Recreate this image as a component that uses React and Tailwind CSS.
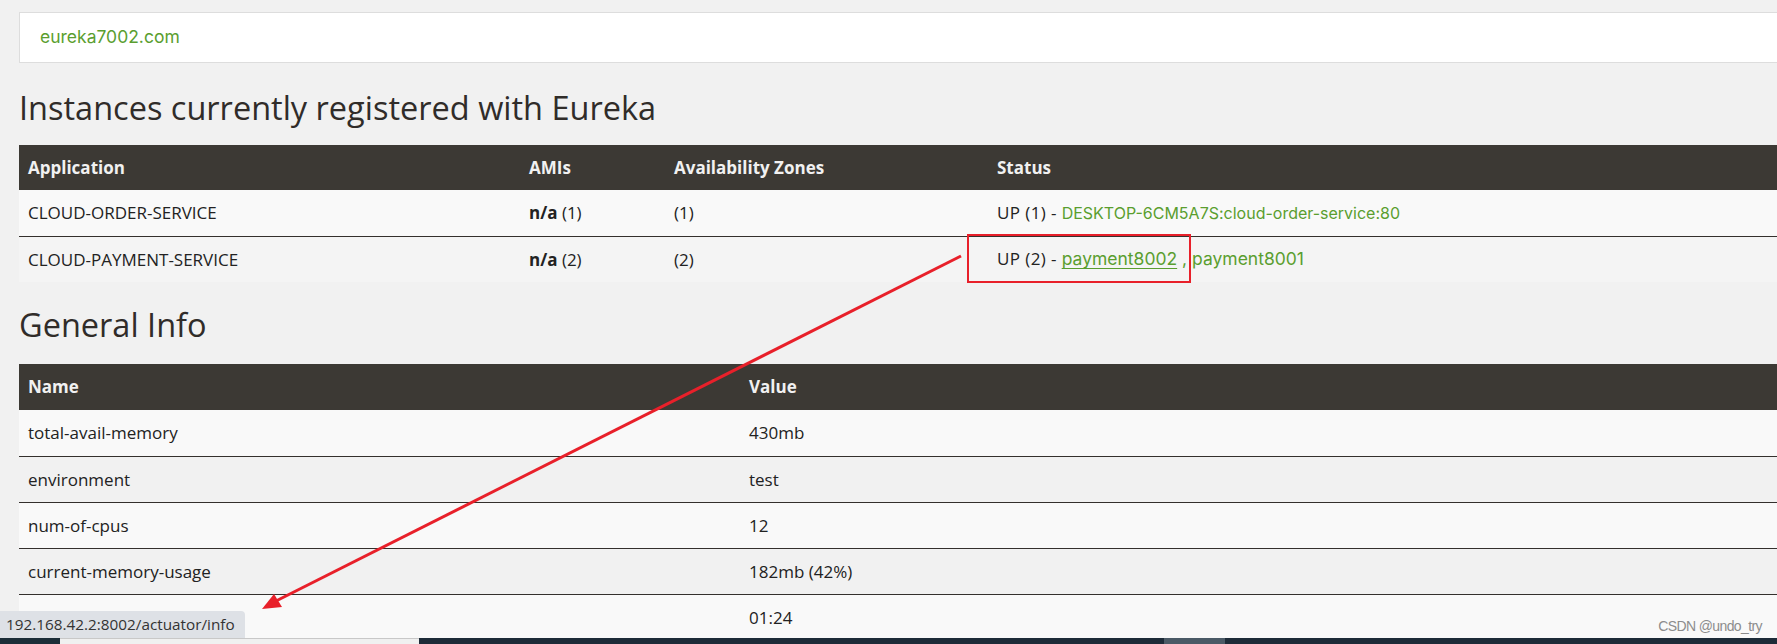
import React from 'react';

const GREEN = 'text-[#5a9e2f]';

const instances = [
  { app: 'CLOUD-ORDER-SERVICE', ami: '(1)', az: '(1)', up: 'UP (1) - ', links: ['DESKTOP-6CM5A7S:cloud-order-service:80'] },
  { app: 'CLOUD-PAYMENT-SERVICE', ami: '(2)', az: '(2)', up: 'UP (2) - ', links: ['payment8002', 'payment8001'] },
];

const info = [
  ['total-avail-memory', '430mb'],
  ['environment', 'test'],
  ['num-of-cpus', '12'],
  ['current-memory-usage', '182mb (42%)'],
  ['server-uptime', '01:24'],
];

const Heading = ({ children, className }) => (
  <h1 className={`font-['Open_Sans',sans-serif] text-[32.5px] leading-[38px] text-[#302c29] ${className}`}>
    {children}
  </h1>
);

const Annotation = () => (
  <svg className="absolute inset-0 pointer-events-none" width="1777" height="644">
    <rect x="968" y="235" width="222" height="47" fill="none" stroke="#e8202a" strokeWidth="2" />
    <line x1="961" y1="256" x2="276" y2="601" stroke="#e8202a" strokeWidth="3" />
    <polygon points="262,609 274,594 282,607" fill="#e8202a" />
  </svg>
);

export default function App() {
  return (
    <div className="relative h-[644px] w-[1777px] overflow-hidden bg-[#f1f1f1] font-['Open_Sans',sans-serif] text-[#222222]">
      <div className="pl-[19px] pt-[12px]">
        <div className="flex h-[51px] items-center border border-r-0 border-[#dddddd] bg-white pl-[20px]">
          <span className={`font-['Inter',sans-serif] text-[17.5px] ${GREEN}`}>eureka7002.com</span>
        </div>

        <Heading className="mt-[26px]">Instances currently registered with Eureka</Heading>

        <div className="mt-[18px] text-[17px]">
          <div className="grid h-[45px] grid-cols-[501px_145px_323px_1fr] items-center bg-[#3c3934] font-bold text-[#f1f1f1]">
            <div className="pl-[9px]">Application</div>
            <div className="pl-[9px]">AMIs</div>
            <div className="pl-[9px]">Availability Zones</div>
            <div className="pl-[9px]">Status</div>
          </div>
          {instances.map((r, i) => (
            <div
              key={r.app}
              className={`grid h-[46px] grid-cols-[501px_145px_323px_1fr] items-center ${i === 0 ? 'bg-[#f9f9f9]' : 'border-t border-[#34302d] bg-[#f4f4f4]'}`}
            >
              <div className="pl-[9px]">{r.app}</div>
              <div className="pl-[9px]"><b>n/a</b> {r.ami}</div>
              <div className="pl-[9px]">{r.az}</div>
              <div className="pl-[9px]">
                <span className="tracking-[0.4px]">{r.up}</span>
                {r.links.length === 1 ? (
                  <span className={`font-['Inter',sans-serif] text-[16px] ${GREEN}`}>{r.links[0]}</span>
                ) : (
                  <span className={`font-['Inter',sans-serif] text-[17.5px] ${GREEN}`}>
                    <span className="underline underline-offset-[3px]">{r.links[0]}</span> ,{' '}{r.links[1]}
                  </span>
                )}
              </div>
            </div>
          ))}
        </div>

        <Heading className="mt-[24px]">General Info</Heading>

        <div className="mt-[20px] text-[17px]">
          <div className="grid h-[46px] grid-cols-[721px_1fr] items-center bg-[#3c3934] font-bold text-[#f1f1f1]">
            <div className="pl-[9px]">Name</div>
            <div className="pl-[9px]">Value</div>
          </div>
          {info.map(([k, v], i) => (
            <div
              key={k}
              className={`grid h-[46px] grid-cols-[721px_1fr] items-center ${i > 0 ? 'border-t border-[#34302d]' : ''} ${i % 2 === 0 ? 'bg-[#f9f9f9]' : 'bg-[#f1f1f1]'}`}
            >
              <div className="pl-[9px]">{k}</div>
              <div className="pl-[9px]">{v}</div>
            </div>
          ))}
        </div>
      </div>

      <Annotation />

      <div className="absolute bottom-[6px] left-0 flex h-[27px] w-[245px] items-center rounded-tr-[4px] bg-[#dee1e6] pl-[6px] font-['Open_Sans',sans-serif] text-[15.3px] text-[#333333]">
        192.168.42.2:8002/actuator/info
      </div>

      <div className="absolute bottom-[7px] right-[15px] font-['Liberation_Sans',sans-serif] text-[14px] tracking-[-0.6px] text-[#8c8c8c]">
        CSDN @undo_try
      </div>

      <div className="absolute bottom-0 left-0 flex h-[6px] w-full">
        <div className="w-[60px] bg-[#1c2d38]" />
        <div className="w-[359px] border-t border-[#c8c8c8] bg-[#f0f0f0]" />
        <div className="w-[745px] bg-[#1d2b38]" />
        <div className="w-[61px] bg-[#4b5a66]" />
        <div className="flex-1 bg-[#1d2b38]" />
      </div>
    </div>
  );
}
